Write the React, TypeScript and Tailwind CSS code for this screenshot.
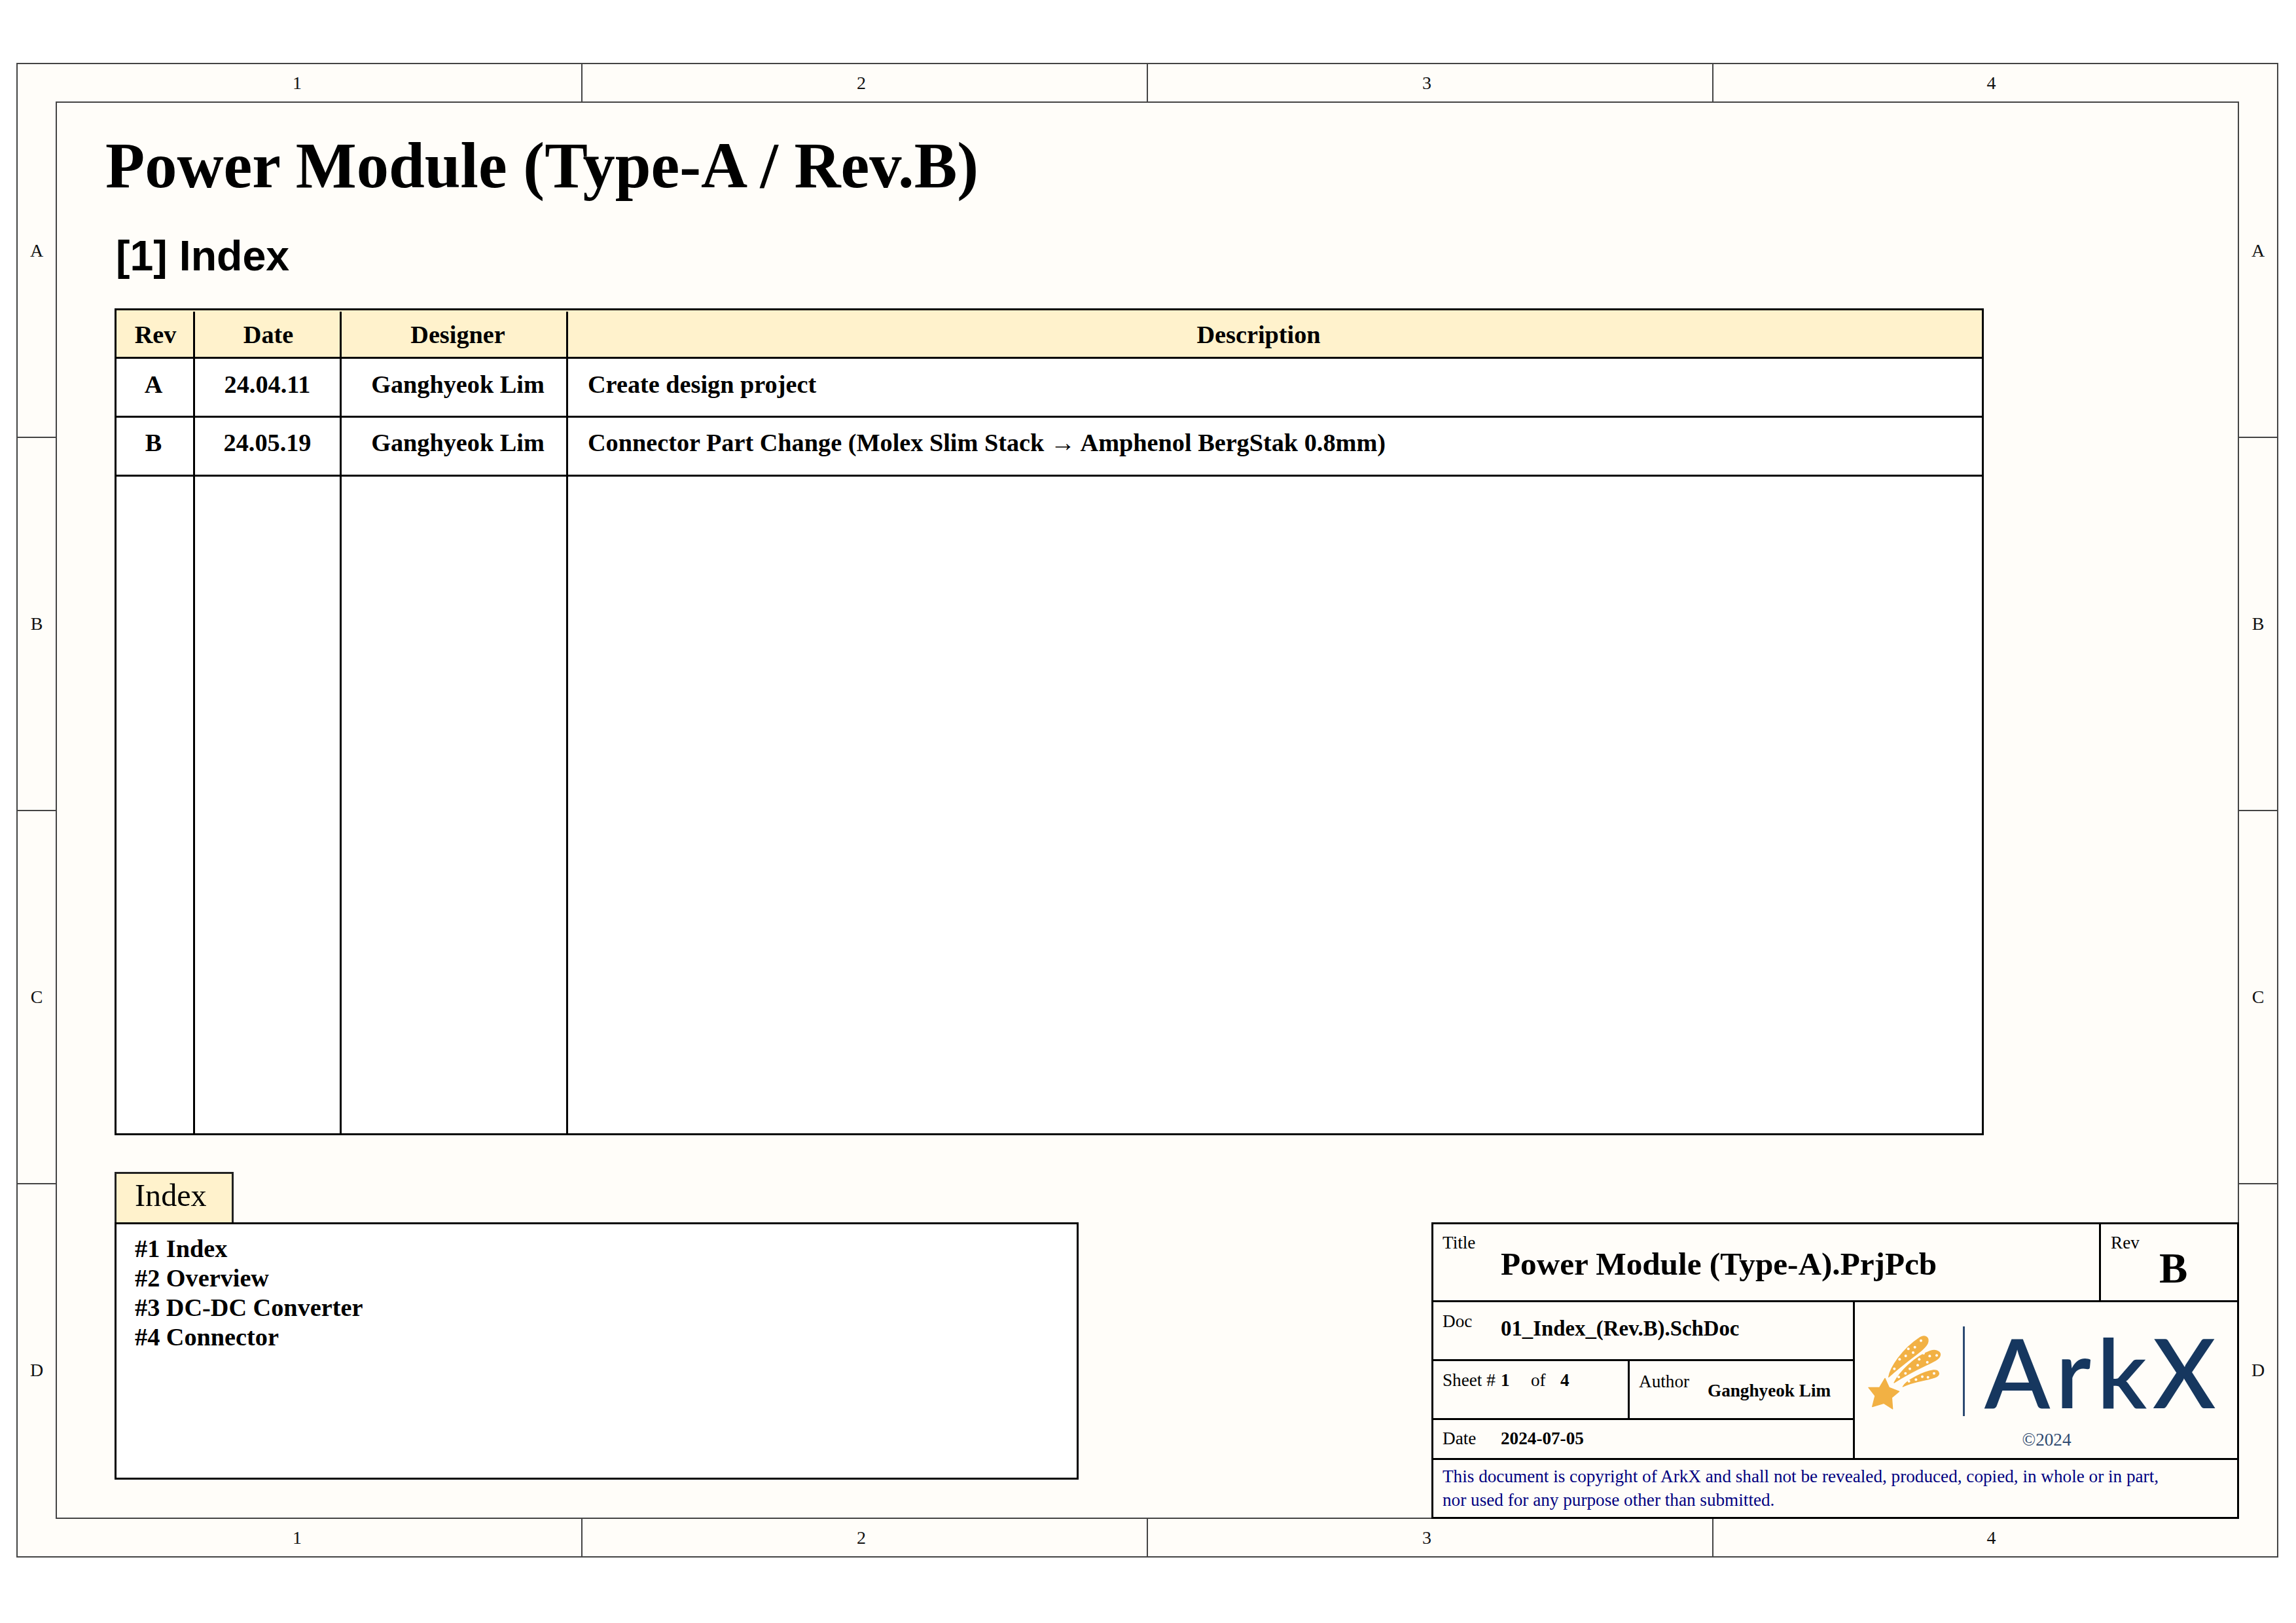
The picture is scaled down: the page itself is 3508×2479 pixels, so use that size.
import React from "react";

const zonesH = ["1", "2", "3", "4"];
const zonesV = ["A", "B", "C", "D"];

function HRuler() {
  return (
    <div className="h-[58px] grid grid-cols-[803px_864px_864px_1fr] text-[28px] leading-none text-[#111]">
      {zonesH.map((z, i) => (
        <div
          key={z}
          className={
            i === 0
              ? "flex items-center justify-center pr-[65px]"
              : i === 3
              ? "flex items-center justify-center pl-[46px] border-l-2 border-[#444]"
              : "flex items-center justify-center pr-[10px] border-l-2 border-[#444]"
          }
        >
          {z}
        </div>
      ))}
    </div>
  );
}

function VRuler() {
  return (
    <div className="w-[58px] shrink-0 grid grid-rows-[569px_570px_570px_1fr] text-[28px] leading-none text-[#111]">
      {zonesV.map((z, i) => (
        <div key={z} className={i === 0 ? "flex items-center justify-center" : "flex items-center justify-center border-t-2 border-[#444]"}>
          {z}
        </div>
      ))}
    </div>
  );
}

function Row({ cells, className, textClass }: { cells: string[]; className: string; textClass: string }) {
  const head = cells[0] === "Rev";
  return (
    <div className={"grid grid-cols-[120px_224px_346px_1fr] " + className}>
      <div className={"border-r-[3px] border-black flex items-center justify-center " + (head ? "pl-[2px] " : "pr-[4px] ") + textClass}>{cells[0]}</div>
      <div className={"border-r-[3px] border-black flex items-center justify-center " + (head ? "pl-[3px] " : "") + textClass}>{cells[1]}</div>
      <div className={"border-r-[3px] border-black flex items-center justify-center pl-[12px] " + textClass}>{cells[2]}</div>
      <div className={"flex items-center " + (head ? "justify-center pr-[50px] " : "pl-[30px] ") + textClass}>{cells[3]}</div>
    </div>
  );
}

function Star() {
  const dots: [number, number][] = [
    [258, 47], [200, 85], [230, 77], [222, 102], [160, 133], [188, 117], [136, 176],
    [270, 105], [250, 133], [298, 118], [330, 115], [287, 146], [243, 160], [207, 176], [187, 197], [156, 214],
    [318, 197], [290, 215], [264, 212], [235, 226], [203, 233],
  ];
  return (
    <svg viewBox="0 0 375 375" className="w-[125px] h-[125px] shrink-0">
      <g fill="#f2b144" stroke="#f2b144" strokeWidth="4" strokeLinejoin="round">
        <path d="M93 220 L112 262 L158 280 L124 308 L128 360 L88 334 L35 350 L48 300 L18 262 L68 262 Z" />
        <path d="M110 214 C118 170 170 88 255 32 C280 18 298 35 288 60 C270 95 215 120 110 214 Z" />
        <path d="M135 240 C160 190 230 120 300 95 C330 85 352 100 345 118 C335 145 260 160 135 240 Z" />
        <path d="M175 258 C195 225 270 190 315 183 C340 180 348 200 330 212 C300 228 230 230 175 258 Z" />
      </g>
      {dots.map(([x, y]) => (
        <circle key={x + "-" + y} cx={x} cy={y} r="6" fill="#fffdf9" />
      ))}
    </svg>
  );
}

function TitleBlock() {
  return (
    <div className="w-[1234px] h-[453px] -mr-[2px] -mb-[2px] border-[3px] border-black flex flex-col text-[27.2px] leading-[27px] text-black">
      <div className="h-[119px] flex border-b-[3px] border-black">
        <div className="w-[1020px] flex pl-[14px] border-r-[3px] border-black">
          <div className="w-[89px] pt-[15px]">Title</div>
          <div className="pt-[36px] text-[49.2px] leading-[49px] font-bold">Power Module (Type-A).PrjPcb</div>
        </div>
        <div className="flex-1 flex pl-[15px]">
          <div className="w-[74px] pt-[15px]">Rev</div>
          <div className="pt-[35px] text-[65px] leading-[65px] font-bold">B</div>
        </div>
      </div>
      <div className="h-[241px] flex border-b-[3px] border-black">
        <div className="w-[644px] flex flex-col border-r-[3px] border-black">
          <div className="h-[90px] flex pl-[14px] border-b-[3px] border-black">
            <div className="w-[89px] pt-[16px]">Doc</div>
            <div className="pt-[24px] text-[32.8px] leading-[33px] font-bold">01_Index_(Rev.B).SchDoc</div>
          </div>
          <div className="h-[90px] flex border-b-[3px] border-black">
            <div className="w-[300px] flex pl-[14px] pt-[16px] border-r-[3px] border-black">
              <div className="w-[89px]">Sheet #</div>
              <div className="w-[46px] font-bold">1</div>
              <div className="w-[45px]">of</div>
              <div className="font-bold">4</div>
            </div>
            <div className="flex-1 flex pl-[14px]">
              <div className="w-[105px] pt-[18px]">Author</div>
              <div className="pt-[32px] font-bold">Ganghyeok Lim</div>
            </div>
          </div>
          <div className="flex-1 flex pl-[14px] pt-[15px]">
            <div className="w-[89px]">Date</div>
            <div className="font-bold">2024-07-05</div>
          </div>
        </div>
        <div className="flex-1 flex flex-col">
          <div className="flex items-center h-[137px] mt-[37px] pl-[15px] text-[#16375f]">
            <Star />
            <div className="w-[3px] h-[137px] ml-[25px] bg-[#2c4a72]" />
            <span className="ml-[30px] text-[146px] leading-[137px] font-['Lato',sans-serif] font-semibold tracking-[9px]">ArkX</span>
          </div>
          <div className="mt-[23px] text-center pl-[2px] text-[#2f4a70]">©2024</div>
        </div>
      </div>
      <div className="flex-1 pl-[14px] pt-[8px] text-[27.2px] leading-[35.5px] text-[#000080]">
        <div>This document is copyright of ArkX and shall not be revealed, produced, copied, in whole or in part,</div>
        <div>nor used for any purpose other than submitted.</div>
      </div>
    </div>
  );
}

export default function App() {
  return (
    <div className="w-[3508px] h-[2479px] bg-white pt-[96px] pl-[25px] font-['Liberation_Serif',serif] text-black overflow-hidden">
      <div className="w-[3456px] h-[2283px] border-2 border-[#444] bg-[#fffdf9] flex">
        <VRuler />
        <div className="flex-1 flex flex-col min-w-0">
          <HRuler />
          <div className="flex-1 border-2 border-[#444] flex flex-col pl-[88px]">
            <h1 className="-ml-[14px] mt-[47px] text-[98.5px] leading-[98px] font-bold whitespace-nowrap">Power Module (Type-A / Rev.B)</h1>
            <h2 className="mt-[57px] ml-[2px] text-[64.5px] leading-[64px] font-bold font-['Liberation_Sans',sans-serif]">[1] Index</h2>
            <div className="mt-[48px] w-[2856px] h-[1263px] border-[3px] border-black bg-white flex flex-col text-[38.25px] leading-[38px] font-bold">
              <Row cells={["Rev", "Date", "Designer", "Description"]} className="h-[74px] bg-[#fff2cc] border-b-[3px] border-black pt-[2px]" textClass="" />
              <Row cells={["A", "24.04.11", "Ganghyeok Lim", "Create design project"]} className="h-[90px] border-b-[3px] border-black" textClass="pb-[10px]" />
              <Row cells={["B", "24.05.19", "Ganghyeok Lim", "Connector Part Change (Molex Slim Stack → Amphenol BergStak 0.8mm)"]} className="h-[90px] border-b-[3px] border-black" textClass="pb-[12px]" />
              <Row cells={["", "", "", ""]} className="flex-1" textClass="" />
            </div>
            <div className="flex-1 flex justify-between items-end pt-[56px]">
              <div className="flex flex-col mb-[58px]">
                <div className="w-[182px] h-[77px] border-[3px] border-b-0 border-[#222] bg-[#fff2cc] pl-[28px] pt-[9px] text-[48.2px] leading-[48px]">Index</div>
                <div className="w-[1473px] h-[393px] border-[3px] border-black bg-white pl-[28px] pt-[15px] text-[38.25px] leading-[45px] font-bold">
                  <div>#1 Index</div>
                  <div>#2 Overview</div>
                  <div>#3 DC-DC Converter</div>
                  <div>#4 Connector</div>
                </div>
              </div>
              <TitleBlock />
            </div>
          </div>
          <HRuler />
        </div>
        <VRuler />
      </div>
    </div>
  );
}
